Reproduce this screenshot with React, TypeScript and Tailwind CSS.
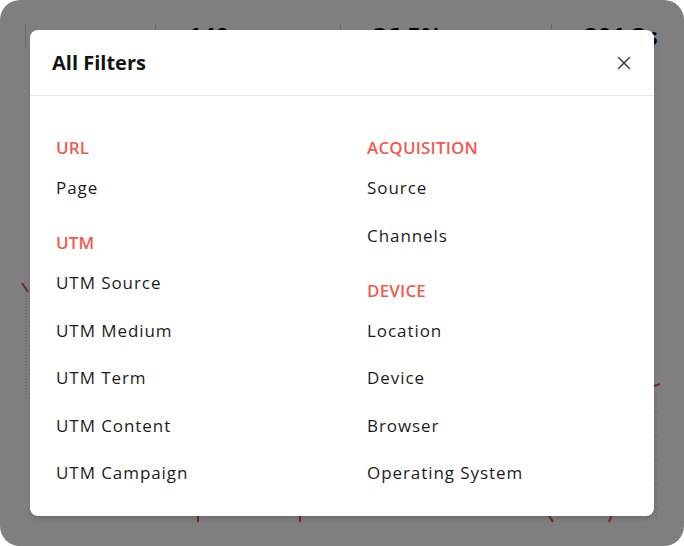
import { X } from "lucide-react";

const leftSections = [
  { title: "URL", items: ["Page"] },
  {
    title: "UTM",
    items: ["UTM Source", "UTM Medium", "UTM Term", "UTM Content", "UTM Campaign"],
  },
];

const rightSections = [
  { title: "ACQUISITION", items: ["Source", "Channels"] },
  { title: "DEVICE", items: ["Location", "Device", "Browser", "Operating System"] },
];

type Section = { title: string; items: string[] };

const FilterColumn = ({ sections }: { sections: Section[] }) => (
  <div className="flex flex-col gap-[31px]">
    {sections.map((s) => (
      <div key={s.title} className="flex flex-col">
        <div className="mb-4 text-[17px] leading-6 font-semibold tracking-[0.01em] text-[#f25a50]">
          {s.title}
        </div>
        <div className="flex flex-col gap-[23.5px]">
          {s.items.map((item) => (
            <button
              key={item}
              className="text-left text-[17px] leading-6 tracking-[0.055em] text-[#1c1c1c]"
            >
              {item}
            </button>
          ))}
        </div>
      </div>
    ))}
  </div>
);

// stats strip behind the overlay, mostly covered by the dialog
const StatsBehind = () => (
  <div className="flex pt-[24px] pl-[25px]">
    <div className="flex w-[130px] items-start gap-2 border-l border-gray-300 pl-9 pt-[1px]">
      <span className="text-[14px] font-semibold text-[#1d9c7a]">↗ 100%</span>
    </div>
    <div className="flex w-[185px] items-start gap-4 border-l border-gray-300 pl-8">
      <span className="text-[24px] leading-none font-bold text-black">140</span>
      <span className="pt-[1px] text-[14px] font-semibold text-[#1d9c7a]">↗ 100%</span>
    </div>
    <div className="flex w-[211px] items-start gap-4 border-l border-gray-300 pl-8">
      <span className="text-[24px] leading-none font-bold text-black">36.5%</span>
      <span className="pt-[1px] text-[14px] font-semibold text-[#1d9c7a]">↗ 100%</span>
    </div>
    <div className="flex w-[133px] items-start gap-4 border-l border-gray-300 pl-8">
      <span className="text-[24px] leading-none font-bold text-black">201.3s</span>
    </div>
  </div>
);

export default function App() {
  return (
    <div className="relative h-[546px] w-[684px] overflow-hidden bg-white font-['Open_Sans',sans-serif]">
      <StatsBehind />
      <svg
        className="absolute left-0 top-0"
        width="684"
        height="546"
        fill="none"
      >
        <path d="M22 283 L28 292" stroke="#e8553f" strokeWidth="2" />
        <path d="M26 292 V400" stroke="#bbb" strokeWidth="1" strokeDasharray="1 2" />
        <path d="M654 386 L660 384" stroke="#e8553f" strokeWidth="2" />
        <path d="M656 386 V520" stroke="#bbb" strokeWidth="1" strokeDasharray="1 2" />
        <path d="M198 514 L198 522" stroke="#e8553f" strokeWidth="2" />
        <path d="M300 514 L300 522" stroke="#e8553f" strokeWidth="2" />
        <path d="M548 514 L553 522" stroke="#e8553f" strokeWidth="2" />
        <path d="M612 514 L609 522" stroke="#e8553f" strokeWidth="2" />
      </svg>

      <div className="absolute inset-0 flex items-start justify-center rounded-[20px] bg-black/50 pt-[30px]">
        <div className="h-[486px] w-[624px] rounded-lg bg-white shadow-md">
          <div className="flex h-[66px] items-center justify-between border-b border-gray-200 pl-[22px] pr-[19px]">
            <h2 className="text-[20px] font-bold text-[#141414]">All Filters</h2>
            <button className="text-[#3a3a3a]">
              <X size={22} strokeWidth={1.5} />
            </button>
          </div>
          <div className="grid grid-cols-2 gap-x-[50px] px-[26px] pt-[40px]">
            <FilterColumn sections={leftSections} />
            <FilterColumn sections={rightSections} />
          </div>
        </div>
      </div>
    </div>
  );
}
